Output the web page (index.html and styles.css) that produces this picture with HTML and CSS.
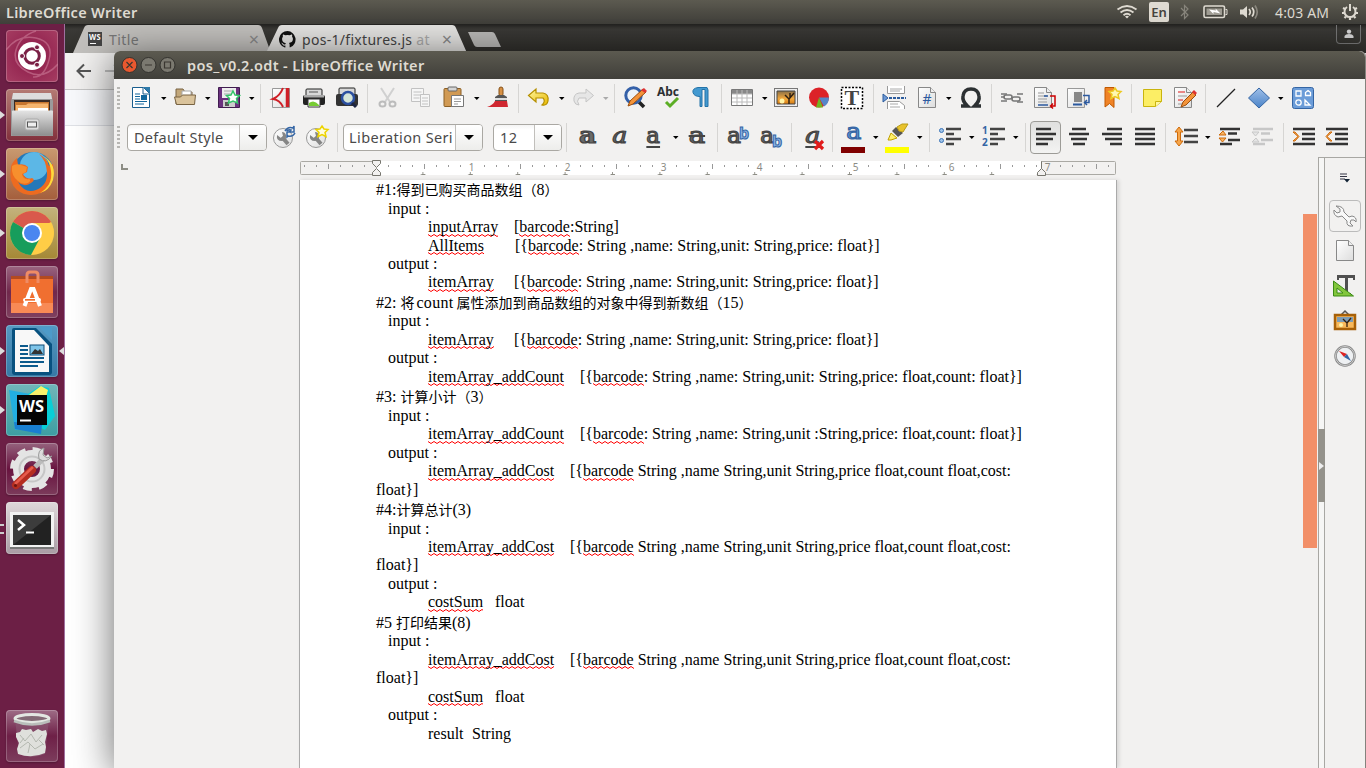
FILE: index.html
```html
<!DOCTYPE html>
<html lang="en">
<head>
<meta charset="utf-8">
<title>pos_v0.2.odt - LibreOffice Writer</title>
<link rel="stylesheet" href="styles.css">
</head>
<body>
<svg class="defs" width="0" height="0">
  <defs>
    <linearGradient id="gold" x1="0" y1="0" x2="1" y2="1"><stop offset="0" stop-color="#fff7a0"/><stop offset="1" stop-color="#e8b800"/></linearGradient>
    <linearGradient id="blue" x1="0" y1="0" x2="0" y2="1"><stop offset="0" stop-color="#9fbfe8"/><stop offset="1" stop-color="#4a83c8"/></linearGradient>
    <linearGradient id="paper" x1="0" y1="0" x2="1" y2="1"><stop offset="0" stop-color="#fff"/><stop offset="1" stop-color="#ddd"/></linearGradient>
    <linearGradient id="silver" x1="0" y1="0" x2="0" y2="1"><stop offset="0" stop-color="#e4e4e4"/><stop offset="1" stop-color="#8e8e8e"/></linearGradient>
    <linearGradient id="sunset" x1="0" y1="0" x2="0" y2="1"><stop offset="0" stop-color="#8a7048"/><stop offset=".6" stop-color="#f5a93c"/><stop offset="1" stop-color="#d47a10"/></linearGradient>
    <symbol id="tri" viewBox="0 0 11 24"><path d="M3 11h5.500l-2.700 3z" fill="currentColor"/></symbol>
    <symbol id="page" viewBox="0 0 24 24"><path d="M3.500 1.500h12l5 5v15h-17z" fill="url(#paper)" stroke="#888"/><path d="M15.500 1.500v5h5" fill="#eee" stroke="#888"/></symbol>
    <symbol id="wrench" viewBox="0 0 24 24"><circle cx="11" cy="13" r="9.500" fill="url(#paper)" stroke="#999"/><path d="M10 12l6 7" stroke="#858585" stroke-width="4"/><path d="M5 10q-1 6 5 6 5-1 4-6-1-3-4-3l1 4-2 2-4-3z" fill="#858585"/></symbol>
  </defs>
</svg>

<header class="panel">
  <span class="panel-title">LibreOffice Writer</span>
  <div class="indicators">
    <svg class="i-wifi" width="22" height="16" viewBox="0 0 22 16" fill="none" stroke="#dfdbd2" stroke-width="1.800"><path d="M1.500 5.500q9.500-7 19 0M4.500 8.500q6.500-5 13 0M7.500 11.300q3.500-3 7 0"/><path d="M9 12.500l2 2 2-2q-2-1.500-4 0z" fill="#dfdbd2" stroke="none"/></svg>
    <span class="lang">En</span>
    <svg class="i-bt" width="10" height="18" viewBox="0 0 10 18" fill="none" stroke="#88857c" stroke-width="1.200"><path d="M1 5l7 7-3.500 3.500v-13L8 6l-7 7"/></svg>
    <svg class="i-bat" width="25" height="14" viewBox="0 0 25 14"><rect x="1" y="1" width="20.500" height="11.500" rx="1.500" fill="none" stroke="#dfdbd2" stroke-width="1.600"/><rect x="3.500" y="3.500" width="15.500" height="6.500" fill="#a09d94"/><path d="M22.500 4.500h1.500v5h-1.500" stroke="#dfdbd2" fill="none"/><path d="M6 4.500l7 1-.500-2 5 5-7-1.500v2z" fill="#fff"/></svg>
    <svg class="i-vol" width="20" height="16" viewBox="0 0 20 16" fill="none" stroke="#dfdbd2" stroke-width="1.700"><path d="M1 5.500h3l4-3.500v12l-4-3.500H1z" fill="#dfdbd2" stroke="none"/><path d="M10 5q2.500 3 0 6M13 3.500q3.500 4.500 0 9"/><path d="M16 1.500q4.500 6.500 0 13" stroke="#8a877e"/></svg>
    <span class="clock">4:03 AM</span>
    <svg class="i-gear" width="18" height="18" viewBox="0 0 18 18" fill="none" stroke="#dfdbd2"><path d="M6 4a5.500 5.500 0 1 0 6 0" stroke-width="2"/><path d="M9 1v7" stroke-width="2"/><path d="M2 5l2 1M16 5l-2 1M1 10h2.500M17 10h-2.500M3.500 15l1.500-1.500M14.500 15L13 13.500M9 17v-2" stroke-width="2.200"/></svg>
  </div>
</header>

<main class="desktop">
  <nav class="launcher">
    <div class="slot"><svg class="tile t-dash" viewBox="0 0 52 52"><g fill="none" stroke="#d58aa4" stroke-width="1.500" opacity=".5"><path d="M0 20Q12 4 30 8t13 22-16 17M52 34Q38 50 22 42T10 20 30 1"/></g><circle cx="26" cy="26" r="14" fill="#fff"/><circle cx="26" cy="26" r="7.300" fill="none" stroke="#7a1f45" stroke-width="3"/><g fill="#7a1f45" stroke="#fff" stroke-width="1"><circle cx="16" cy="26" r="2.500"/><circle cx="31" cy="17.300" r="2.500"/><circle cx="31" cy="34.700" r="2.500"/></g></svg></div>
    <div class="slot run"><svg class="tile t-files" viewBox="0 0 52 52"><path d="M7 5h38l2 7v35H5V12z" fill="#9b9b9b"/><path d="M7 4h38l1 6H6z" fill="#ddd"/><rect x="8" y="11" width="36" height="12" fill="#3a2b25"/><path d="M9 13h34v9H9z" fill="#c8762f"/><path d="M10 16h10l2-1.500h20V22H10z" fill="#f5b56f"/><path d="M12 19h30v3H12z" fill="#fff"/><rect x="6" y="21.500" width="41" height="25" rx="1" fill="url(#silver)"/><rect x="19" y="30" width="14" height="11" rx="2" fill="#ddd" stroke="#aaa"/><rect x="21.500" y="33" width="9" height="5" fill="#eee" stroke="#555"/></svg></div>
    <div class="slot run"><svg class="tile t-firefox" viewBox="0 0 52 52"><circle cx="27" cy="25" r="21" fill="#2478b8"/><circle cx="28" cy="18" r="14" fill="#5cb7e6"/><path d="M33 6q8 4 10 12l4-2q4 22-12 29-14 5-24-3Q2 34 5 19q1-5 6-9l1 7q6-2 10 2l-1 5-4 2q3 6 9 4 4 2-1 5-7 5-13-1 7 12 18 8 12-5 11-18-1-12-8-18z" fill="#ed6b20"/><path d="M38 8q13 9 9 24-4 11-13 13 13-8 11-22-1-9-7-15z" fill="#ffd93b"/><path d="M6 18q4-3 9-1l6 2-1 5-4 2q1 6 7 5 3 1-1 4-6 2-10-2Q5 28 6 18z" fill="#f78f2d"/></svg></div>
    <div class="slot run"><svg class="tile t-chrome" viewBox="0 0 52 52"><circle cx="26" cy="26" r="22" fill="#ffcd46"/><path d="M26 26L7 15a22 22 0 0 1 38 0z" fill="#d9594c"/><path d="M7 15a22 22 0 0 0 18 33l9-17-8-5z" fill="#179d5c"/><path d="M26 16h19q4 8 2 15H34z" fill="#ffcd46"/><circle cx="26" cy="26" r="10" fill="#fff"/><circle cx="26" cy="26" r="8" fill="#4a86f0"/></svg></div>
    <div class="slot"><svg class="tile t-store" viewBox="0 0 52 52"><path d="M5 10h42v6H5z" fill="#b34a20"/><path d="M5 13h42v34H5z" fill="#f06f30"/><path d="M5 37h42v10H5z" fill="#f88a55"/><path d="M21 17V9q0-3 3-3h5q3 0 3 3v8" fill="none" stroke="#ef8c65" stroke-width="3"/><path d="M18.500 40l6.500-17h2.500L34 40" fill="none" stroke="#fff" stroke-width="4"/><rect x="17" y="32" width="18" height="4" rx="2" fill="#fff"/><rect x="19" y="33" width="10" height="1.700" fill="#f06f30"/></svg></div>
    <div class="slot run active"><svg class="tile t-writer" viewBox="0 0 52 52"><path d="M6 5q0-2 2-2h22l16 16v28q0 3-3 3H9q-3 0-3-3z" fill="#08517f"/><path d="M33 2h13v13z" fill="#4d9bc9"/><path d="M9 5h19l15 16v26H9z" fill="#f8f8f8"/><g stroke="#0c5a8c" stroke-width="2"><path d="M14 21h8M14 25h8M14 29h8M14 33h24M14 37h24M14 41h18"/></g><rect x="24" y="20" width="14" height="10" fill="#7ec4e8" stroke="#0c4a76"/><path d="M25 29l4-5 3 2 2-2 3 5z" fill="#333"/></svg></div>
    <div class="slot run"><svg class="tile t-ws" viewBox="0 0 52 52"><path d="M3 6l21 4 4 34-19 2z" fill="#22aee0"/><path d="M22 10l12-8 9 2 6 28-10 14-16-8z" fill="#08cfd6"/><path d="M23 11l12-9 7 4-2 7z" fill="#f8f06a"/><path d="M8 38l28 3-1 9-26-5z" fill="#197fd0"/><rect x="11" y="11" width="30" height="30" fill="#050505"/><text x="13" y="28" font-family="Open Sans" font-weight="700" font-size="16" textLength="25" lengthAdjust="spacingAndGlyphs" fill="#fff">WS</text><path d="M14 36.500h11" stroke="#fff" stroke-width="2"/></svg></div>
    <div class="slot"><svg class="tile t-tools" viewBox="0 0 52 52"><circle cx="26" cy="26" r="13.500" fill="none" stroke="#e4e4e4" stroke-width="11"/><circle cx="26" cy="26" r="19.500" fill="none" stroke="#e4e4e4" stroke-width="5" stroke-dasharray="8.300 7.015"/><circle cx="26" cy="26" r="12.500" fill="none" stroke="#c6c6c6" stroke-width="2"/><path d="M26 27L10 42" stroke="#b52d20" stroke-width="8" stroke-linecap="round"/><path d="M27 24L9 41" stroke="#e65b4c" stroke-width="2.500"/><circle cx="9.500" cy="42.500" r="1.500" fill="#6d1510"/><path d="M29 24l8-8" stroke="#bbb" stroke-width="5"/><path d="M38 5q-7 2-5 11 7 5 13-3l-5 2-4-3 1-7z" fill="#ddd" stroke="#999"/></svg></div>
    <div class="slot multi"><svg class="tile t-term" viewBox="0 0 52 52"><rect x="4" y="10" width="44" height="36" fill="#f2f2f2"/><rect x="4" y="45" width="44" height="2" fill="#777"/><rect x="7" y="13" width="38" height="30" fill="#222"/><path d="M7 13h38L7 43z" fill="#3c3c3c"/><path d="M12 18l6 5-6 5" fill="none" stroke="#fff" stroke-width="2.500"/><path d="M20 30.500h8" stroke="#fff" stroke-width="2"/></svg></div>
    <div class="slot trash"><svg class="tile t-trash" viewBox="0 0 52 52"><path d="M9 9h34l-4 35q-13 6-26 0z" fill="#8b5873" opacity=".6"/><path d="M10 23l4-1 2-3 4 1 5-1 2 3 5-3 4 2 4-1 1 4-1 4-1 4 1 5-1 6q-13 6-27 1l-1-5 2-6-3-6z" fill="#dfe0dc"/><path d="M14 25l5 6 6-7 5 8 6-7M14 38l8-6 7 7 8-5M18 28l-4 5M33 30l5 5M24 34l-2 9" stroke="#b4b8b0" fill="none"/><ellipse cx="26" cy="8.500" rx="17" ry="4" fill="#836a75" stroke="#e3e7e2" stroke-width="3"/><path d="M8 11q18 7 36 0" stroke="#b9beba" fill="none" stroke-width="2.500"/></svg></div>
  </nav>

  <section class="browser">
    <div class="tabs">
      <svg class="tabshape back" width="204" height="28" viewBox="0 0 204 28"><path d="M6 28L17 3q1-3 4-3h170q3 0 4 3l9 25z" fill="#c2c0bd"/></svg>
      <svg class="tabshape front" width="204" height="28" viewBox="0 0 204 28"><path d="M0 28L12 3q1-3 4-3h170q3 0 4 3l11 25z" fill="#e4e3e1"/></svg>
      <div class="tab one"><svg width="14" height="14" viewBox="0 0 14 14"><path d="M0 0h14v14H0z" fill="#444"/><text x="1" y="8" font-family="Open Sans" font-weight="700" font-size="8" textLength="12" lengthAdjust="spacingAndGlyphs" fill="#fff">WS</text><path d="M2 11.500h6" stroke="#fff"/></svg><span class="tab-label">Title</span><span class="tab-x">×</span></div>
      <div class="tab two"><svg width="17" height="17" viewBox="0 0 16 16"><path d="M8 0a8 8 0 0 0-2.500 15.600c.4.100.5-.2.500-.4v-1.500c-2.200.5-2.700-1-2.700-1-.4-.9-.9-1.200-.9-1.200-.7-.5.100-.5.100-.5.800.1 1.200.8 1.200.8.700 1.200 1.900.9 2.300.7.100-.5.300-.9.500-1.100-1.800-.2-3.600-.9-3.600-4 0-.9.300-1.600.8-2.100-.1-.2-.4-1 .1-2.100 0 0 .7-.2 2.200.8a7.600 7.600 0 0 1 4 0c1.500-1 2.200-.8 2.200-.8.400 1.100.2 1.900.1 2.100.5.600.8 1.300.8 2.100 0 3.100-1.900 3.700-3.700 3.900.3.300.6.800.6 1.500v2.200c0 .2.100.5.600.4A8 8 0 0 0 8 0z" fill="#111"/></svg><span class="tab-label">pos-1/fixtures.js <i>at</i></span><span class="tab-x">×</span></div>
      <svg class="newtab" width="33" height="15" viewBox="0 0 33 15"><path d="M0 0h24q2 0 3 2l6 13H9q-2 0-3-2z" fill="#b9b8b6"/></svg>
      <span class="user"><svg width="10" height="10" viewBox="0 0 10 10" fill="#d6d6d6"><circle cx="5" cy="2.600" r="2.200"/><path d="M.5 9V7q1-2 4.500-2t4.500 2v2z"/></svg></span>
    </div>
    <div class="browser-bar"><svg width="50" height="18" viewBox="0 0 50 18" fill="none" stroke-width="2"><path d="M15 9H2M8 2.500L1.500 9 8 15.500" stroke="#555"/><path d="M29 9h15M38 2.500L44.500 9 38 15.500" stroke="#bbb"/></svg></div>
    <div class="bookmark-bar"></div>
  </section>

  <section class="window">
    <div class="titlebar">
      <svg width="56" height="18" viewBox="0 0 56 18"><g stroke="#33322e"><circle cx="9.500" cy="9" r="7.500" fill="#e9582f"/><circle cx="28.500" cy="9" r="7.500" fill="#7b7970"/><circle cx="47.500" cy="9" r="7.500" fill="#7b7970"/></g><path d="M6.500 6l6 6M12.500 6l-6 6M25 9h7M44.500 6h6v6h-6z" fill="none" stroke="#3a3630" stroke-width="1.200"/></svg>
      <h1>pos_v0.2.odt - LibreOffice Writer</h1>
    </div>

    <div class="toolbar">
      <b class="handle"></b>
      <span class="ic"><svg viewBox="0 0 24 24"><path d="M3.500 1.500h11l6 6v14h-17z" fill="#fff" stroke="#1a5e8e"/><path d="M14 1h7v7z" fill="#2d79a9"/><path d="M14 2v6h6" fill="#fff" stroke="#1a5e8e"/><path d="M6 8h5M6 10.500h5M6 13h5M6 15.500h12M6 18h9" stroke="#13679c" stroke-width="1.200"/><path d="M12 9h6v5h-6z" fill="#12679c"/></svg></span><svg class="dd"><use href="#tri"/></svg>
      <span class="ic"><svg viewBox="0 0 24 24"><path d="M3 18V3h7l2 3h7v12z" fill="#c2a77a" stroke="#786342"/><path d="M9 5h9v8H9z" fill="#fff" stroke="#aaa"/><path d="M1.500 11h6l2-2h13l-1 9.500h-18z" fill="#dac39b" stroke="#786342"/></svg></span><svg class="dd"><use href="#tri"/></svg>
      <span class="ic"><svg viewBox="0 0 24 24"><path d="M1.500 1.500h21v20h-21z" fill="#6b317e" stroke="#411d50"/><path d="M5 2h14v10H5z" fill="#eee"/><path d="M7 5h9M7 8h7" stroke="#aaa"/><path d="M6 14h12v7H6z" fill="#ccc"/><path d="M8 16h4v4H8z" fill="#555"/><path d="M16 5l2 4 4.500.5-3 3 1 4.500-4.500-2-4.500 2 1-4.500-3-3L14 9z" fill="#fff" stroke="#35c46b" stroke-width="1.500"/></svg></span><svg class="dd"><use href="#tri"/></svg><i class="sep"></i>
      <span class="ic"><svg viewBox="0 0 24 24"><path d="M3.500 2.500h17v19h-17z" fill="url(#paper)" stroke="#999"/><path d="M18.500 2v19" stroke="#cf1f27" stroke-width="3.500"/><path d="M14 2q-3 8-10 11 7 1 10 8" fill="none" stroke="#cf1f27" stroke-width="2"/></svg></span>
      <span class="ic"><svg viewBox="0 0 24 24"><rect x="4" y="3" width="16" height="8" rx="1" fill="#d8d8d8" stroke="#222"/><path d="M7 6h9" stroke="#555"/><rect x="1" y="9" width="22" height="10" rx="2" fill="#222"/><path d="M2 9h20v2.500H2z" fill="#aaa"/><path d="M6 13h12v8H6z" fill="#fff" stroke="#333"/><path d="M7 17q5-4 10 2v1H7z" fill="#7c3"/></svg></span>
      <span class="ic"><svg viewBox="0 0 24 24"><rect x="4" y="2" width="16" height="7" rx="1" fill="#d8d8d8" stroke="#222"/><rect x="1" y="8" width="22" height="12" rx="2" fill="#333"/><circle cx="13" cy="12" r="6" fill="#d6e5d8" stroke="#2c50a0" stroke-width="2.500"/><path d="M17 17l4 4" stroke="#1c2542" stroke-width="3"/></svg></span><i class="sep"></i>
      <span class="ic"><svg viewBox="0 0 24 24" fill="none" stroke="#bcbcbc" stroke-width="2"><path d="M5 2l9 14M18 2L9 16" stroke="#d0d0d0"/><ellipse cx="6.500" cy="18" rx="3" ry="2.500"/><ellipse cx="16.500" cy="18" rx="3" ry="2.500"/></svg></span>
      <span class="ic"><svg viewBox="0 0 24 24" fill="#f6f6f6" stroke="#c2c2c2"><path d="M2.500 2.500h12v13h-12z"/><path d="M4.500 6h8M4.500 9h8M4.500 12h6"/><path d="M11.500 8.500h9v12h-9z"/><path d="M13 12h6M13 15h6M13 18h6"/></svg></span>
      <span class="ic"><svg viewBox="0 0 24 24"><rect x="2" y="2.500" width="17" height="18" rx="1" fill="#d19a54" stroke="#8b5f25"/><rect x="6" y="1" width="9" height="4" rx="1" fill="#d5d5d5" stroke="#666"/><path d="M9.500 9.500h12v11h-12z" fill="#fff" stroke="#777"/><path d="M12 13h7M12 15.500h7M12 18h4" stroke="#999"/></svg></span><svg class="dd"><use href="#tri"/></svg>
      <span class="ic"><svg viewBox="0 0 24 24"><rect x="13" y="1" width="4" height="9" rx="2" fill="#d79043" stroke="#855018"/><path d="M9 11l3-2h6l3 2v4H9z" fill="#555"/><path d="M9 12h12v2H9z" fill="#ddd"/><path d="M9 15h12l1 6H1q6-2 8-6z" fill="#cf2730"/></svg></span><i class="sep"></i>
      <span class="ic"><svg viewBox="0 0 24 24"><path d="M1.500 9.500L9 3v4h7q6 1 5 8-1 5-6 4 4-4 1-7H9v4z" fill="url(#gold)" stroke="#b59000" stroke-width="1.200"/></svg></span><svg class="dd"><use href="#tri"/></svg>
      <span class="ic"><svg viewBox="0 0 24 24"><path d="M22.500 9.500L15 3v4H8q-6 1-5 8 1 4 5 4-3-4 0-7h7v4z" fill="#e6e6e6" stroke="#c5c5c5"/></svg></span><svg class="dd dim"><use href="#tri"/></svg><i class="sep"></i>
      <span class="ic"><svg viewBox="0 0 24 24"><path d="M16 16l5 5" stroke="#222" stroke-width="3.500"/><circle cx="10.500" cy="9.500" r="7.700" fill="#edf2f7" stroke="#3460a8" stroke-width="3"/><path d="M5 20l2-5L20 3l3 3L10 18z" fill="#f39339" stroke="#9b4d0d"/><path d="M18 4l3-2 3 3-2 2z" fill="#d33"/></svg></span>
      <span class="ic"><svg viewBox="0 0 24 24"><text x="1" y="9.500" font-family="Noto Sans" font-weight="700" font-size="12" textLength="22" lengthAdjust="spacingAndGlyphs" fill="#2c3033">Abc</text><path d="M10 16l4 4 8-8" fill="none" stroke="#5cae25" stroke-width="3"/></svg></span>
      <span class="ic"><svg viewBox="0 0 24 24"><path d="M18 1.500H9q-6 1-5 5 1 4 7 4v10h2v-17h3v17h3V4z" fill="#4399d0" stroke="#2473a8"/></svg></span><i class="sep"></i>
      <span class="ic"><svg viewBox="0 0 24 24"><path d="M1.500 3.500h21v16h-21z" fill="#fff" stroke="#777"/><path d="M2 4h20v4H2z" fill="#888"/><path d="M2 8h20M2 12h20M2 16h20M7 4v15M12 4v15M17 4v15" stroke="#bbb"/></svg></span><svg class="dd"><use href="#tri"/></svg>
      <span class="ic"><svg viewBox="0 0 24 24"><rect x=".5" y="2.500" width="23" height="18" fill="#eee" stroke="#777"/><path d="M3 5h18v13H3z" fill="url(#sunset)" stroke="#444"/><circle cx="8" cy="15" r="2.500" fill="#fff4a5"/><path d="M15 18v-5l-4-4M15 13l5-6M16 12V7" stroke="#302010" fill="none" stroke-width="1.500"/></svg></span>
      <span class="ic"><svg viewBox="0 0 24 24"><circle cx="12" cy="11.500" r="10" fill="#dc2228"/><path d="M12 11.500h10q0 6-5 9z" fill="#5586c8"/><path d="M12 11.500l4 10H9z" fill="#72b522"/></svg></span>
      <span class="ic"><svg viewBox="0 0 24 24"><rect x="1.500" y="1.500" width="21" height="21" fill="#fff" stroke="#000" stroke-dasharray="2 1.500" stroke-width="1.500"/><text x="4.500" y="18.500" font-family="Liberation Serif" font-weight="700" font-size="22" fill="#444">T</text></svg></span><i class="sep"></i>
      <span class="ic"><svg viewBox="0 0 24 24"><path d="M5.500 0v7.500h17V0M5.500 23v-7.500h12l5 4V23" fill="#fff" stroke="#999"/><path d="M8 3h12M8 5h10M8 18h8M8 21h10" stroke="#aaa"/><path d="M1 8l5 4-5 4z" fill="#6d99d5" stroke="#2d5c9d"/><path d="M7 12h17" stroke="#2d5c9d" stroke-width="2" stroke-dasharray="3 1"/></svg></span>
      <span class="ic"><svg viewBox="0 0 24 24"><use href="#page"/><text x="7.500" y="18" font-family="Noto Sans" font-size="14" fill="#2c5aa0">#</text></svg></span><svg class="dd"><use href="#tri"/></svg>
      <span class="ic"><svg viewBox="0 0 24 24"><path d="M2 20h6.500Q3 15 4 10q1-7 8-7t8 7q1 5-4.500 10H22" fill="none" stroke="#2c3032" stroke-width="3.500"/></svg></span><i class="sep"></i>
      <span class="ic"><svg viewBox="0 0 24 24" fill="none" stroke="#777" stroke-width="1.600"><rect x="4" y="9" width="8" height="4" rx="2"/><rect x="12" y="11" width="8" height="4" rx="2"/><path d="M1 8h6M17 8h6M1 11l4 0M1 15h6M17 16h6"/></svg></span>
      <span class="ic"><svg viewBox="0 0 24 24"><use href="#page" x="-2"/><path d="M5 7h6M5 10h9M5 13h9M5 16h9" stroke="#999"/><path d="M5 19h10M11 10h4" stroke="#2c5aa0" stroke-width="1.500"/><path d="M17 10h5v10h-4M20 17.500L17.500 20l2.500 2.500" fill="none" stroke="#c00" stroke-width="1.500"/></svg></span>
      <span class="ic"><svg viewBox="0 0 24 24"><path d="M1.500 2.500h17v19h-17z" fill="url(#paper)" stroke="#999"/><path d="M8 6h8v10H8z" fill="#888"/><path d="M7 18.500h9" stroke="#2c5aa0" stroke-width="2"/><path d="M17 9.500h6v7h-4M21 14l-2.500 2.500L21 19" fill="none" stroke="#2c5aa0" stroke-width="1.500"/></svg></span>
      <span class="ic"><svg viewBox="0 0 24 24"><path d="M6 1.500h9v20l-4.500-4L6 21z" fill="#f08326" stroke="#c05900"/><path d="M16 2l2 3 4 .5-3 3 1 4-4-2-4 2 1-4-3-3 4-.5z" fill="#fff7b0" stroke="#edc920" stroke-width="1.500"/></svg></span><i class="sep"></i>
      <span class="ic"><svg viewBox="0 0 24 24"><path d="M3.500 3.500h18v12l-6 5h-12z" fill="#fcee65" stroke="#c9b40e"/><path d="M15.500 20.500v-5h6" fill="#fff7a0" stroke="#c9b40e"/></svg></span>
      <span class="ic"><svg viewBox="0 0 24 24"><use href="#page" x="-2"/><path d="M5 6h7M5 14h5" stroke="#e01818"/><path d="M5 10h9M5 18h5" stroke="#999"/><path d="M8 21l2-5 10-10 3 3-10 10z" fill="#f39339" stroke="#9b4d0d"/><path d="M19 6l2-2 3 3-2 2z" fill="#d33"/></svg></span><i class="sep"></i>
      <span class="ic"><svg viewBox="0 0 24 24"><path d="M3 21L21 3" stroke="#222" stroke-width="1.300"/></svg></span>
      <span class="ic"><svg viewBox="0 0 24 24"><path d="M12 2l10.500 10L12 22 1.500 12z" fill="url(#blue)" stroke="#3465a4"/></svg></span><svg class="dd"><use href="#tri"/></svg>
      <span class="ic"><svg viewBox="0 0 24 24"><rect x="1.500" y="1.500" width="21" height="21" rx="2" fill="#6b9cd8" stroke="#3465a4"/><g fill="none" stroke="#fff" stroke-width="1.300"><path d="M5 5h5v5H5zM14 14l5 5h-5zM17 4.500l2.500 2v3h-5v-3z"/><circle cx="7.500" cy="16.500" r="2.700"/></g></svg></span>
    </div>

    <div class="toolbar second">
      <b class="handle"></b>
      <span class="combo style"><span>Default Style</span><i></i></span>
      <span class="ic"><svg viewBox="0 0 24 24"><use href="#wrench"/><path d="M13 6q3-5 8-3l1-2v6h-5l2-2q-3-1-4 1M23 8q-2 4-7 3l-1 1V7h4" fill="none" stroke="#3465a4" stroke-width="1.500"/></svg></span>
      <span class="ic"><svg viewBox="0 0 24 24"><use href="#wrench"/><path d="M17 1l2 3 4 .5-3 3 1 4-4-2-4 2 1-4-3-3 4-.5z" fill="#fffce0" stroke="#edd400" stroke-width="1.500"/></svg></span><i class="sep"></i>
      <span class="combo font"><span>Liberation Seri</span><i></i></span>
      <span class="combo size"><span>12</span><i></i></span><i class="sep"></i>
      <span class="ic"><span class="glyph bold">a</span></span>
      <span class="ic"><span class="glyph ital">a</span></span>
      <span class="ic"><span class="glyph under">a</span></span><svg class="dd"><use href="#tri"/></svg>
      <span class="ic"><span class="glyph strike">a</span></span><i class="sep"></i>
      <span class="ic"><span class="glyph">a<sup>b</sup></span></span>
      <span class="ic"><span class="glyph">a<sub>b</sub></span></span><i class="sep"></i>
      <span class="ic"><span class="glyph ital under">a</span><svg class="badge" viewBox="0 0 12 12"><path d="M2 2l8 8M10 2l-8 8" stroke="#e01b1b" stroke-width="3.200"/></svg></span><i class="sep"></i>
      <span class="ic swatch red"><span class="glyph blue">a</span></span><svg class="dd"><use href="#tri"/></svg>
      <span class="ic swatch yellow"><svg viewBox="0 0 24 24"><path d="M3 17l3-7 6 5-6 2z" fill="#fff06a" stroke="#c0a000"/><path d="M7 8l4-4 7 6-5 4z" fill="#555"/><path d="M12 4l5-3h6l-5 8-4-1z" fill="#e8c22c" stroke="#b89c18"/></svg></span><svg class="dd"><use href="#tri"/></svg><i class="sep"></i>
      <span class="ic"><svg viewBox="0 0 24 24"><g fill="#9fc3e8" stroke="#3b74b8"><circle cx="3.500" cy="5.500" r="2"/><circle cx="3.500" cy="15.500" r="2"/></g><path d="M8 4h15M8 9h8M8 14h15M8 19h8" stroke="#444" stroke-width="2.300"/></svg></span><svg class="dd"><use href="#tri"/></svg>
      <span class="ic"><svg viewBox="0 0 24 24"><text x="0" y="9" font-family="Noto Sans" font-weight="700" font-size="10" fill="#3465a4">1</text><text x="0" y="20.500" font-family="Noto Sans" font-weight="700" font-size="10" fill="#3465a4">2</text><path d="M8 4h15M8 9h8M8 14h15M8 19h8" stroke="#444" stroke-width="2.300"/></svg></span><svg class="dd"><use href="#tri"/></svg><i class="sep"></i>
      <span class="ic pressed"><svg viewBox="0 0 24 24"><path d="M2 4h15M2 9h20M2 14h17M2 19h12" stroke="#333" stroke-width="2.300"/></svg></span>
      <span class="ic"><svg viewBox="0 0 24 24"><path d="M5 4h14M2 9h20M4 14h16M6 19h12" stroke="#333" stroke-width="2.300"/></svg></span>
      <span class="ic"><svg viewBox="0 0 24 24"><path d="M7 4h15M2 9h20M5 14h17M10 19h12" stroke="#333" stroke-width="2.300"/></svg></span>
      <span class="ic"><svg viewBox="0 0 24 24"><path d="M2 4h20M2 9h20M2 14h20M2 19h20" stroke="#333" stroke-width="2.300"/></svg></span><i class="sep"></i>
      <span class="ic"><svg viewBox="0 0 24 24"><path d="M5 2l4 5H6.500v9H9l-4 5-4-5h2.500V7H1z" fill="#f7a64a" stroke="#ce6a0b"/><path d="M10 5h14M10 11h14M10 17h14" stroke="#444" stroke-width="2.300"/></svg></span><svg class="dd"><use href="#tri"/></svg>
      <span class="ic"><svg viewBox="0 0 24 24"><path d="M2 4h20M10 8.500h9M10 15h12M2 19h12" stroke="#333" stroke-width="2.300"/><path d="M1 10l4-4 3 4zM1 13h7l-3.500 4z" fill="#f9b260" stroke="#ce6a0b"/></svg></span>
      <span class="ic"><svg viewBox="0 0 24 24"><path d="M2 4h20M10 8.500h9M10 15h12M2 19h12" stroke="#c7c7c7" stroke-width="2.300"/><path d="M1 7h7l-3.500 4zM1 17l4-4 3 4z" fill="#e5e5e5" stroke="#c7c7c7"/></svg></span><i class="sep"></i>
      <span class="ic"><svg viewBox="0 0 24 24"><path d="M1 4h22M10 9h13M10 14h13M1 19h22" stroke="#333" stroke-width="2.300"/><path d="M1 7l5 4.500L1 16h2l4-4.500L3 7z" fill="#f9b260" stroke="#ce6a0b"/></svg></span>
      <span class="ic"><svg viewBox="0 0 24 24"><path d="M1 4h22M10 9h13M10 14h13M1 19h22" stroke="#333" stroke-width="2.300"/><path d="M7 7l-5 4.500L7 16H5l-4-4.500L5 7z" fill="#f9b260" stroke="#ce6a0b"/></svg></span>
    </div>

    <div class="work">
      <div class="canvas">
        <div class="ruler-row">
          <svg class="tabkind" width="7" height="6" viewBox="0 0 7 6"><path d="M1 0v5h6" fill="none" stroke="#8d8d85" stroke-width="2"/></svg>
          <svg class="ruler" width="818" height="18" viewBox="0 0 818 18">
            <defs>
              <pattern id="ticks" x="76" width="96" height="18" patternUnits="userSpaceOnUse"><path d="M12.500 5v2M24.500 5v2M36.500 5v2M60.500 5v2M72.500 5v2M84.500 5v2M48.500 4v5" stroke="#999"/></pattern>
              <pattern id="stops" x="76" width="47.400" height="18" patternUnits="userSpaceOnUse"><path d="M45 14.500h4M47 12v2M0 14.500h2" stroke="#8d8d85"/></pattern>
            </defs>
            <rect x=".5" y="1.500" width="815" height="13" rx="1" fill="#f2f1f0" stroke="#aaa9a4"/>
            <path d="M76 1h665v14H76z" fill="#fff"/>
            <path d="M2 2h813v12H2z" fill="url(#ticks)"/>
            <path d="M78 10h662v6H78z" fill="url(#stops)"/>
            <g font-family="Noto Sans" font-size="10" fill="#8b8b85" text-anchor="middle"><text x="171.500" y="10.500">1</text><text x="267.500" y="10.500">2</text><text x="363.500" y="10.500">3</text><text x="459.500" y="10.500">4</text><text x="555.500" y="10.500">5</text><text x="651.500" y="10.500">6</text><text x="747.500" y="10.500">7</text></g>
            <path d="M72.500.5h8v3l-4 4-4-4zM72.500 15.500v-3l4-4 4 4v3zM737.500 15.500v-3l4-4 4 4v3zM741.500 1.500v7" fill="#f2f1f0" stroke="#77766f"/>
          </svg>
        </div>
        <article class="paper">
          <p class="cjk">#1:<em>得到已购买商品数组（</em>8<em>）</em></p>
          <p class="in1">input :</p>
          <p class="in2"><span class="w86"><u>inputArray</u></span><span>[<u>barcode</u>:String]</span></p>
          <p class="in2"><span class="w87"><u>AllItems</u></span><span>[{<u>barcode</u>: String ,name: String,unit: String,price: float}]</span></p>
          <p class="in1">output :</p>
          <p class="in2"><span class="w86"><u>itemArray</u></span><span>[{<u>barcode</u>: String ,name: String,unit: String,price: float}]</span></p>
          <p class="cjk">#2: <em>将</em><span class="cnt">count</span><em>属性添加到商品数组的对象中得到新数组（</em>15<em>）</em></p>
          <p class="in1">input :</p>
          <p class="in2"><span class="w86"><u>itemArray</u></span><span>[{<u>barcode</u>: String ,name: String,unit: String,price: float}]</span></p>
          <p class="in1">output :</p>
          <p class="in2"><span class="w152"><u>itemArray_addCount</u></span><span>[{<u>barcode</u>: String ,name: String,unit: String,price: float,count: float}]</span></p>
          <p class="cjk">#3: <em>计算小计（</em>3<em>）</em></p>
          <p class="in1">input :</p>
          <p class="in2"><span class="w152"><u>itemArray_addCount</u></span><span>[{<u>barcode</u>: String ,name: String,unit :String,price: float,count: float}]</span></p>
          <p class="in1">output :</p>
          <p class="in2"><span class="w142"><u>itemArray_addCost</u></span><span>[{<u>barcode</u> String ,name String,unit String,price float,count float,cost:</span></p>
          <p>float}]</p>
          <p class="cjk">#4:<em>计算总计</em>(3)</p>
          <p class="in1">input :</p>
          <p class="in2"><span class="w142"><u>itemArray_addCost</u></span><span>[{<u>barcode</u> String ,name String,unit String,price float,count float,cost:</span></p>
          <p>float}]</p>
          <p class="in1">output :</p>
          <p class="in2"><span class="w67"><u>costSum</u></span><span>float</span></p>
          <p class="cjk last">#5 <em>打印结果</em>(8)</p>
          <p class="in1">input :</p>
          <p class="in2"><span class="w142"><u>itemArray_addCost</u></span><span>[{<u>barcode</u> String ,name String,unit String,price float,count float,cost:</span></p>
          <p>float}]</p>
          <p class="in2"><span class="w67"><u>costSum</u></span><span>float</span></p>
          <p class="in1">output :</p>
          <p class="in2"><span class="w44">result</span><span>String</span></p>
        </article>
      </div>
      <div class="scroll"><div class="thumb"></div></div>
      <div class="splitter"><div class="grip"><svg width="5" height="8" viewBox="0 0 5 8"><path d="M0 0l5 4-5 4z" fill="#eee"/></svg></div></div>
      <aside class="sidebar">
        <svg class="menu" width="10" height="10" viewBox="0 0 10 10"><path d="M0 1h7M0 3.500h7M0 6h5" stroke="#334"/><path d="M4 6h6L7 9.500z" fill="#123"/></svg>
        <span class="side sel"><svg viewBox="0 0 24 24"><path d="M3 2l4 3v3L4 9 1 6q-1 5 4 7l4-1 5 5q-1 6 6 5l-3-3 1-3 3 0 2 2q1-5-4-6l-3 1-5-5Q11 2 3 2z" fill="#f8f8f8" stroke="#888"/></svg></span>
        <span class="side"><svg viewBox="0 0 24 24"><use href="#page"/></svg></span>
        <span class="side"><svg viewBox="0 0 24 24"><path d="M4 1h18v5h-2V4h-5v15h3v2H9v-2h3V4H6v2H4z" fill="#505050"/><path d="M.5 7v15h20z" fill="#82c63c" stroke="#3b8b15"/><path d="M4 14v5h6z" fill="#f0f0f0" stroke="#3b8b15"/></svg></span>
        <span class="side"><svg viewBox="0 0 24 24"><path d="M8 6l4-4 4 4" fill="none" stroke="#555" stroke-width="1.500"/><rect x="2" y="6" width="20" height="14" fill="#f8b95c" stroke="#a76008" stroke-width="2.500"/><path d="M4 8h16v5H4z" fill="#7d9cb5"/><circle cx="8" cy="16" r="2" fill="#fff4a5"/><path d="M14 18v-4l-4-4M14 14l4-5" stroke="#332010" fill="none" stroke-width="1.300"/></svg></span>
        <span class="side"><svg viewBox="0 0 24 24"><circle cx="12" cy="12" r="9.500" fill="#eef0f2" stroke="#888" stroke-width="2.500"/><circle cx="12" cy="12" r="9.500" fill="none" stroke="#ccc" stroke-width="1"/><path d="M6 7l8 3-3 3z" fill="#d22"/><path d="M18 17l-7-4 3-3z" fill="#3465a4"/></svg></span>
      </aside>
    </div>
  </section>
</main>
</body>
</html>
```
FILE: styles.css
```css
* { box-sizing: border-box; }
body { margin: 0; width: 1366px; height: 768px; overflow: hidden; font-family: "Noto Sans", sans-serif; background: #fff; }
.defs { position: absolute; }
svg { display: block; flex: none; }

.panel { height: 24px; display: flex; align-items: center; justify-content: space-between; background: linear-gradient(#5c5a50, #403f3a); color: #dfdbd2; font-size: 14px; }
.panel-title { padding-left: 6px; font-weight: 600; font-size: 14.500px; letter-spacing: .3px; }
.indicators { display: flex; align-items: center; padding-right: 7px; }
.i-wifi { margin-right: 11px; }
.lang { width: 20px; height: 20px; border-radius: 2px; background: #dfdbd2; color: #46443e; font-size: 13px; font-weight: 600; line-height: 20px; text-align: center; margin-right: 11px; }
.i-bt { margin-right: 13px; }
.i-bat { margin-right: 11px; }
.i-vol { margin-right: 16px; }
.clock { width: 54px; margin-right: 12px; font-size: 14px; letter-spacing: .15px; white-space: nowrap; }

.desktop { position: relative; height: 744px; display: flex; }
.launcher { width: 65px; flex: none; background: #6c1f45; border-right: 1px solid #a0709f; display: flex; flex-direction: column; gap: 7px; padding: 6px 0 6px 6px; }
.slot { position: relative; height: 52px; }
.slot.trash { margin-top: auto; }
.slot.run::before, .slot.active::after { content: ""; position: absolute; left: -6px; top: 22px; border: 4px solid transparent; border-left: 5px solid #ddd; border-right: 0; }
.slot.active::after { left: 53px; border-left: 0; border-right: 5px solid #ddd; }
.slot.multi::before { content: ""; position: absolute; left: -6px; top: 22px; width: 4px; height: 6px; border-top: 2px solid #ccc; border-bottom: 2px solid #ccc; }
.tile { width: 52px; height: 52px; border-radius: 4px; box-shadow: inset 0 0 0 1px rgba(255,255,255,.22), 0 1px 2px rgba(0,0,0,.25); }
.t-dash { background: radial-gradient(#8a1847, #a63d62); }
.t-files { background: linear-gradient(#b47b74, #82303c); }
.t-firefox { background: linear-gradient(#c99a70, #a45e3c); }
.t-chrome { background: linear-gradient(#c4b37d, #a58835); }
.t-store { background: linear-gradient(#9a6580, #70284c 50%, #7f405f); }
.t-writer { background: linear-gradient(#5699c2, #3679a5); }
.t-ws { background: linear-gradient(#71b5b9, #3d9ea2); }
.t-tools { background: linear-gradient(#95627d, #68133f 50%, #7c3b5b); }
.t-term { background: linear-gradient(#dfd8da, #a99ca4); }
.t-trash { background: linear-gradient(#9e6c86, #6e2047 50%, #7d3d5d); }

.browser { flex: 1; display: flex; flex-direction: column; }
.tabs { position: relative; height: 29px; background: linear-gradient(#22211f, #3a3936 5px, #302f2b); }
.tabshape { position: absolute; top: 1px; }
.tabshape.back { left: 2px; }
.tabshape.front { left: 201px; }
.tab { position: absolute; top: 1px; height: 28px; display: flex; align-items: center; font-size: 14px; }
.tab.one { left: 23px; width: 171px; color: #777; letter-spacing: .4px; }
.tab.two { left: 214px; width: 173px; color: #444; letter-spacing: .3px; }
.tab svg { margin-right: 7px; }
.tab.two svg { margin-right: 6px; }
.tab-label { flex: 1; white-space: nowrap; }
.tab-label i { font-style: normal; color: #aaa; }
.tab-x { color: #888; font-size: 18px; line-height: 20px; letter-spacing: 0; }
.newtab { position: absolute; left: 403px; top: 8px; }
.user { position: absolute; left: 1271px; top: 1px; width: 25px; height: 19px; border: 1px solid #777; border-top: 0; border-radius: 0 0 4px 4px; display: flex; justify-content: center; padding-top: 4px; }
.browser-bar { height: 37px; background: #f2f1f0; border-bottom: 1px solid #c6c6c6; padding: 9px 0 0 11px; }
.bookmark-bar { height: 36px; background: #f8f9fc; border-bottom: 1px solid #dfe1e6; }

.window { position: absolute; left: 114px; top: 27px; width: 1252px; height: 717px; display: flex; flex-direction: column; background: #f2f1f0; border-right: 1px solid #85837d; border-radius: 6px 6px 0 0; box-shadow: 0 6px 40px rgba(0,0,0,.6); }
.titlebar { height: 28px; flex: none; display: flex; align-items: center; gap: 12px; padding-left: 6px; border-radius: 6px 6px 0 0; background: linear-gradient(#5c5a50, #403f3a); }
.titlebar h1 { margin: 0 0 0 -1px; font-size: 14.500px; font-weight: 600; letter-spacing: .35px; color: #dfdbd2; }
.toolbar { height: 39px; flex: none; display: flex; align-items: center; padding-left: 3px; padding-bottom: 1px; color: #000; }
.handle { width: 3px; height: 23px; margin-right: 4.500px; background: repeating-linear-gradient(#b7b6b3 0 2px, transparent 2px 4px); }
.ic { position: relative; width: 33px; height: 33px; flex: none; display: flex; align-items: center; justify-content: center; }
.ic > svg { width: 24px; height: 24px; overflow: visible; }
.dd { width: 11px; height: 24px; }
.dd.dim { color: #aaa; }
.sep { width: 1px; height: 29px; margin: 0 3.550px; flex: none; background: #d6d5d3; }
.second { height: 40px; padding-bottom: 2px; }
.second .handle { margin-right: 7px; }
.combo { height: 27px; flex: none; display: flex; border: 1px solid #aaa8a3; border-radius: 4px; background: linear-gradient(#f4f4f4, #fff 5px); color: #4a4a4a; font-size: 14.500px; overflow: hidden; }
.combo span { flex: 1; padding-left: 6px; line-height: 25px; white-space: nowrap; letter-spacing: .25px; }
.combo i { width: 27px; flex: none; border-left: 1px solid #c1bfbb; background: linear-gradient(#fff, #ededeb); display: flex; align-items: center; justify-content: center; }
.combo i::after { content: ""; border: 5px solid transparent; border-top-color: #000; border-bottom: 0; }
.combo.style { width: 140px; }
.combo.font { width: 140px; margin: 0 10px 0 2px; }
.combo.font span { padding-left: 5px; letter-spacing: .35px; }
.combo.size { width: 69px; margin-right: .5px; }
.glyph { font: 400 23px/24px "DejaVu Serif", serif; color: #6a6a6a; height: 28px; white-space: nowrap; -webkit-text-stroke: 1.200px #444; }
.glyph.bold { font-weight: 700; transform: scaleX(1.150); }
.glyph.ital { font-style: italic; transform: scaleX(1.100); }
.glyph.under { text-decoration: underline; text-decoration-thickness: 2px; text-underline-offset: 3px; }
.glyph.strike { text-decoration: line-through; text-decoration-thickness: 2px; transform: scaleX(1.200); }
.glyph sup, .glyph sub { font-size: 16px; line-height: 0; color: #8db3e6; -webkit-text-stroke: 1px #3465a4; font-family: "Noto Sans", sans-serif; font-weight: 700; margin-left: -2px; }
.glyph sup { vertical-align: 4px; }
.glyph sub { vertical-align: -4px; }
.glyph.blue { color: #6b98d5; -webkit-text-stroke: 1.200px #3465a4; transform: translateY(-4px) scaleX(1.100); }
.ic > .badge { position: absolute; right: 4px; bottom: 3px; width: 12px; height: 12px; }
.swatch::after { content: ""; position: absolute; left: 4px; bottom: 1px; width: 24px; height: 6px; background: #800000; }
.swatch.yellow::after { background: #ff0; }
.swatch > svg { transform: translateY(-2px); }
.pressed { width: 31px; margin: 0 1px; border: 1px solid #9c9b97; border-radius: 4px; background: linear-gradient(#e0e0df, #f3f3f2); }

.work { flex: 1; display: flex; min-height: 0; }
.canvas { width: 1189px; flex: none; display: flex; flex-direction: column; }
.ruler-row { height: 20px; flex: none; display: flex; align-items: flex-start; padding: 2px 0 0 7px; }
.tabkind { margin: 4px 172px 0 0; }
.paper { flex: 1; width: 818px; margin: 2px 0 0 185px; padding: 0 0 0 76px; background: #fff; border-left: 1px solid #aaa; border-right: 1px solid #aaa; box-shadow: 2px 0 4px rgba(0,0,0,.12); font: 16px/18.450px "Liberation Serif", "Noto Sans CJK SC", serif; color: #000; overflow: hidden; }
.paper p { margin: 0; height: 18.450px; display: flex; white-space: pre; }
.paper .cjk { height: 20.600px; line-height: 20.600px; display: block; }
.paper p:first-child { margin-top: -.9px; }
.paper em { font-style: normal; font-family: "Noto Sans CJK SC", sans-serif; font-size: 14px; }
.cnt { margin: 0 3px 0 2px; letter-spacing: .3px; }
.paper .in1 { padding-left: 12px; }
.paper .in2 { padding-left: 52px; }
.paper u { display: inline-block; height: 18.450px; text-decoration: none; background: url("data:image/svg+xml,%3Csvg xmlns='http://www.w3.org/2000/svg' width='6' height='3'%3E%3Cpath d='M0 .5L3 2.500L6 .5' fill='none' stroke='%23f00'/%3E%3C/svg%3E") repeat-x left bottom; }
.w44 { width: 44px; }
.w67 { width: 67px; }
.w86 { width: 86px; }
.w87 { width: 87px; }
.w142 { width: 142px; }
.w152 { width: 152px; }

.scroll { width: 15px; flex: none; padding-top: 56px; }
.thumb { width: 14px; height: 334px; background: #f28f68; }
.splitter { width: 7px; flex: none; margin-top: -1px; border: 1px solid #a8a7a3; border-bottom: 0; background: #f6f6f5; padding-top: 271px; }
.grip { width: 7px; height: 73px; margin-left: -1px; display: flex; align-items: center; justify-content: center; background: #94928b; }
.sidebar { flex: 1; margin-top: -1px; border-top: 1px solid #a8a7a3; display: flex; flex-direction: column; align-items: center; gap: 3px; }
.menu { margin: 15px 0 14px; }
.side { width: 32px; height: 32px; display: flex; align-items: center; justify-content: center; }
.side svg { width: 24px; height: 24px; }
.side.sel { border: 1px solid #bbb; border-radius: 4px; }
```
